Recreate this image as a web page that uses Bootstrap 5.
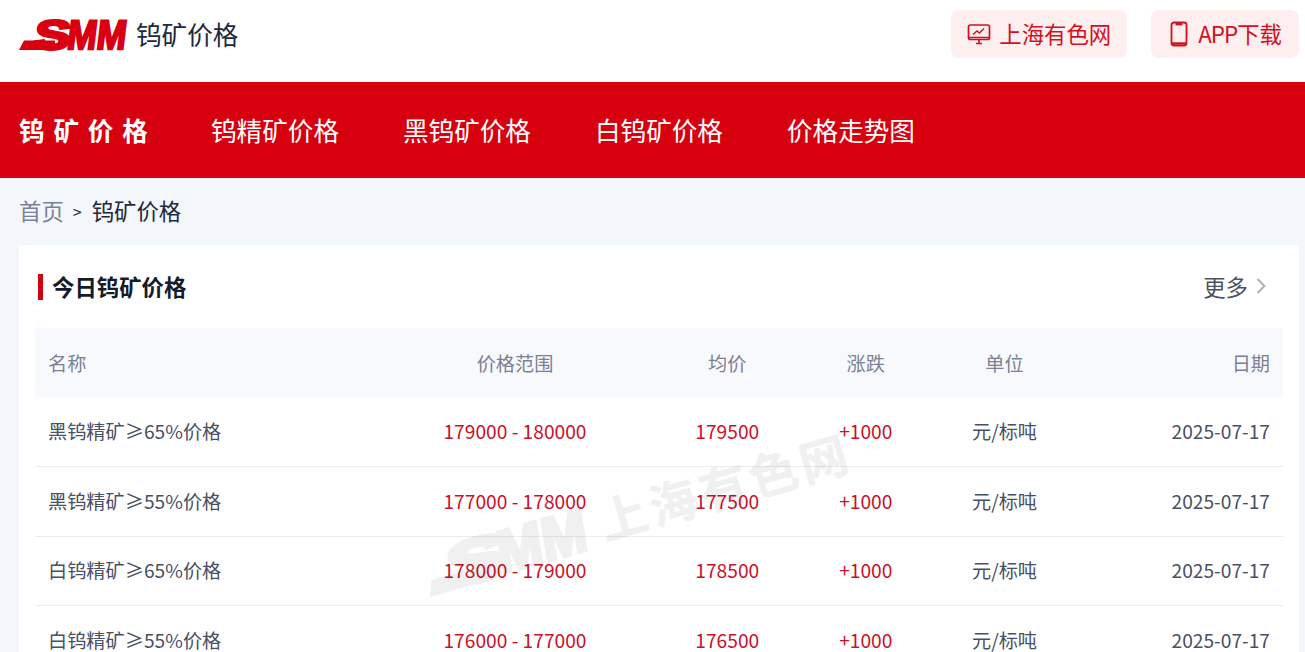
<!DOCTYPE html>
<html lang="zh-CN">
<head>
<meta charset="utf-8">
<title>钨矿价格</title>
<link href="https://cdn.jsdelivr.net/npm/bootstrap@5.3.0/dist/css/bootstrap.min.css" rel="stylesheet">
<style>
html,body{height:652px;overflow:hidden}
body{font-family:"Noto Sans CJK SC","Noto Sans",sans-serif;background:#f3f6fb;color:#1c2536}
.top-bar{height:82px;background:#fff;padding:0 6px 14px 19px}
.logo-mark{width:110px;height:34px;display:block;overflow:visible}
.logo-txt{font-family:"Liberation Sans",sans-serif;font-weight:700}
.site-name{font-size:25.6px;line-height:34px;margin-left:7px;color:#1c2a3f}
.pill{height:48px;border-radius:8px;background:#fdeeef;color:#d2101f;font-size:22.4px;text-decoration:none;padding:0 16px}
.pill:hover{color:#d2101f}
.pill-app{padding:0 17px 0 18px}
.pill-app svg{margin-right:9px}
.latin-tight{letter-spacing:-1px}
.red-nav{height:96px;background:#d7000f;padding:0 19px;color:#fff;font-size:25.6px;gap:64px}
.red-nav a{color:#fff;text-decoration:none}
.nav-head{font-weight:700;letter-spacing:8.8px;width:128px;white-space:nowrap}
.crumbs{height:67px;padding:0 19px 2px;font-size:22.4px;color:#1f2937}
.crumbs a{color:#7b8194;text-decoration:none}
.crumbs .sep{font-size:16px;margin:0 10px 0 9px;color:#333}
.panel{position:relative;margin:0 6px 0 19px;background:#fff;height:500px;padding:0 16px}
.panel-head{height:83px;padding:0 16px 0 3px}
.title-tick{width:5px;height:26px;background:#d2000f;margin-right:9px}
.panel-title{font-size:22.4px;font-weight:700;margin:0;color:#141c2b}
.more{font-size:22.4px;color:#4a5263;text-decoration:none;gap:7px}
.price-table{table-layout:fixed;width:1248px;font-size:19.2px;margin:0}
.price-table th,.price-table td{padding:0 13px;vertical-align:middle;font-weight:400;height:69.5px;border-bottom:1px solid #ececef;background:transparent;color:#475064;box-shadow:none}
.price-table thead th{height:69px;padding-top:2px;background:#f7f9fd;border:0;color:#7b8194}
.price-table td.up{color:#c9112a}
.wm{position:absolute;left:0;top:0;width:100%;height:100%;pointer-events:none}
</style>
</head>
<body>
<header class="top-bar d-flex align-items-center justify-content-between">
  <div class="d-flex align-items-center">
    <svg class="logo-mark" viewBox="0 0 110 34" aria-label="SMM">
      <polygon points="0,33 5,23.5 36,23.5 36,33" fill="#d90011"/>
      <g transform="translate(0,32) skewX(-7)">
        <text class="logo-txt" x="14" y="0" font-size="41" textLength="36" lengthAdjust="spacingAndGlyphs" fill="#d90011" stroke="#d90011" stroke-width="3">S</text>
        <text class="logo-txt" x="47" y="0" font-size="41" textLength="59" lengthAdjust="spacingAndGlyphs" fill="#d90011" stroke="#d90011" stroke-width="2.4">MM</text>
      </g>
    </svg>
    <span class="site-name">钨矿价格</span>
  </div>
  <div class="d-flex" style="gap:24px">
    <a class="pill d-flex align-items-center" href="#">
      <svg width="24" height="24" viewBox="0 0 24 24" fill="none" stroke="#d2101f" stroke-width="1.7" class="me-2"><rect x="1.5" y="3" width="21" height="14.5" rx="2"/><path d="M9 21.5h6M12 17.5v4M2 15.5h20" /><path d="M6 12.5l4-3.5 2.5 2L17 6.5" stroke-width="1.4"/></svg>
      <span>上海有色网</span>
    </a>
    <a class="pill pill-app d-flex align-items-center" href="#">
      <svg width="20" height="26" viewBox="0 0 20 26" fill="none" stroke="#d2101f" stroke-width="1.8"><rect x="2.5" y="1.5" width="15" height="23" rx="2.5"/><path d="M7.5 2h5v1.5h-5z" fill="#d2101f"/><path d="M3 22.5h14" stroke-width="2.4"/></svg>
      <span><span class="latin-tight">APP</span>下载</span>
    </a>
  </div>
</header>
<nav class="red-nav d-flex align-items-center">
  <span class="nav-head">钨矿价格</span>
  <a href="#">钨精矿价格</a>
  <a href="#">黑钨矿价格</a>
  <a href="#">白钨矿价格</a>
  <a href="#">价格走势图</a>
</nav>
<div class="crumbs d-flex align-items-center">
  <a href="#">首页</a><span class="sep">&gt;</span><span>钨矿价格</span>
</div>
<main class="panel">
  <div class="panel-head d-flex align-items-center justify-content-between">
    <div class="d-flex align-items-center"><span class="title-tick"></span><h2 class="panel-title">今日钨矿价格</h2></div>
    <a class="more d-flex align-items-center" href="#"><span>更多</span>
      <svg width="12" height="18" viewBox="0 0 12 18" fill="none" stroke="#a9adb8" stroke-width="1.8"><path d="M2.5 2l7 7-7 7"/></svg>
    </a>
  </div>
  <table class="table price-table">
    <colgroup><col style="width:337px"><col style="width:286px"><col style="width:138.5px"><col style="width:138.5px"><col style="width:139px"><col style="width:209px"></colgroup>
    <thead><tr><th>名称</th><th class="text-center">价格范围</th><th class="text-center">均价</th><th class="text-center">涨跌</th><th class="text-center">单位</th><th class="text-end">日期</th></tr></thead>
    <tbody>
      <tr><td>黑钨精矿≥65%价格</td><td class="text-center up">179000 - 180000</td><td class="text-center up">179500</td><td class="text-center up">+1000</td><td class="text-center">元/标吨</td><td class="text-end">2025-07-17</td></tr>
      <tr><td>黑钨精矿≥55%价格</td><td class="text-center up">177000 - 178000</td><td class="text-center up">177500</td><td class="text-center up">+1000</td><td class="text-center">元/标吨</td><td class="text-end">2025-07-17</td></tr>
      <tr><td>白钨精矿≥65%价格</td><td class="text-center up">178000 - 179000</td><td class="text-center up">178500</td><td class="text-center up">+1000</td><td class="text-center">元/标吨</td><td class="text-end">2025-07-17</td></tr>
      <tr><td>白钨精矿≥55%价格</td><td class="text-center up">176000 - 177000</td><td class="text-center up">176500</td><td class="text-center up">+1000</td><td class="text-center">元/标吨</td><td class="text-end">2025-07-17</td></tr>
    </tbody>
  </table>
  <svg class="wm" viewBox="0 0 1280 500" aria-hidden="true">
    <g transform="translate(411,352) rotate(-16)" fill="#000" stroke="#000" opacity=".055">
      <polygon points="0,0 6,-16 70,-16 70,0" stroke="none"/>
      <g transform="skewX(-7)">
        <text class="logo-txt" x="22" y="-2" font-size="60" textLength="62" lengthAdjust="spacingAndGlyphs" stroke-width="5">S</text>
        <text class="logo-txt" x="74" y="-2" font-size="60" textLength="92" lengthAdjust="spacingAndGlyphs" stroke-width="4">MM</text>
      </g>
      <text x="184" y="-6" font-size="48" font-weight="700" letter-spacing="4" stroke-width=".5">上海有色网</text>
    </g>
  </svg>
</main>
<script src="https://cdn.jsdelivr.net/npm/bootstrap@5.3.0/dist/js/bootstrap.bundle.min.js"></script>
</body>
</html>
